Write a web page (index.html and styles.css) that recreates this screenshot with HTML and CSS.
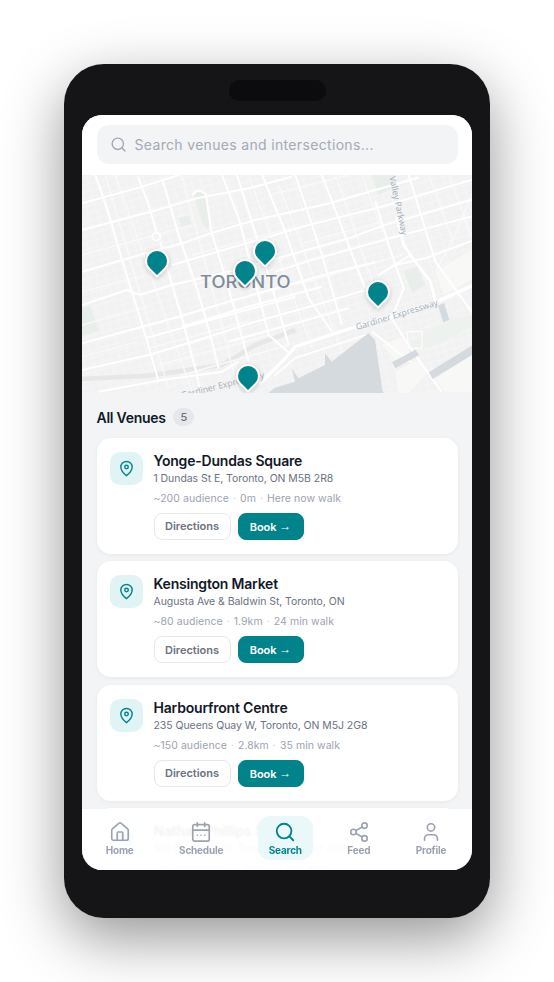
FILE: index.html
```html
<!DOCTYPE html>
<html lang="en">
<head>
  <meta charset="UTF-8" />
  <meta name="viewport" content="width=device-width, initial-scale=1.0" />
  <title>Venue Search</title>
  <link rel="stylesheet" href="styles.css">
</head>
<body>
  <div class="phone">
    <div class="notch"></div>
    <div class="screen">
      <div class="search-head">
        <div class="search-box">
          <svg class="search-icon" viewBox="0 0 24 24"><circle cx="11" cy="11" r="8"/><path d="m21 21-4.3-4.3"/></svg>
          <span>Search venues and intersections...</span>
        </div>
      </div>

      <div class="map">
        <svg class="map-art" viewBox="0 0 1170 654" preserveAspectRatio="none">
          <defs>
            <pattern id="blocks" width="27" height="21" patternUnits="userSpaceOnUse" patternTransform="rotate(-16)">
              <rect width="27" height="21" fill="#f1f2f1"/>
              <path d="M0 10H27M13 0V21" stroke="#f6f6f6" stroke-width="2.5"/>
            </pattern>
          </defs>
          <rect x="0" y="0" width="1176" height="660" fill="url(#blocks)"/>

          <!-- parks -->
          <g fill="#e8eee9">
            <path d="M338 70q2-22 18-20 16 2 20 30l6 70-8 12-12-14z"/>
            <path d="M0 400l25-8 25 75-50 15z"/>
            <path d="M965 290l40-15 25 55-40 25z"/>
            <path d="M870 0h70l-10 40-40 20z"/>
            <path d="M290 130l30-8 10 30-30 8z"/>
            <path d="M985 500l120-70 70-10v30l-110 60-70 20z" fill="#eef2ee"/>
          </g>

          <!-- open ground by the lake -->
          <g fill="#f8f8f7">
            <path d="M1060 290l116-70v90l-90 50z"/>
            <path d="M900 510l60-25 25 50-40 25z"/>
            <path d="M940 590l70-40 30 40-60 64h-30z"/>
            <path d="M1060 610l116-80v120h-90z"/>
          </g>

          <!-- rail corridor -->
          <path d="M0 612L200 602 420 570 520 510 640 465" fill="none" stroke="#e6e8e7" stroke-width="14"/>

          <!-- side streets -->
          <g fill="none" stroke="#f9f9f9" stroke-width="4">
            <path d="M100 0L330 650M300 0L470 650M590 30L780 530M70 0L260 640M500 0L690 520"/>
            <path d="M0 240L330 150M0 350L190 300M560 60L800 0M640 330L960 240M330 240L640 155M660 205L900 140"/>
            <path d="M0 545L170 500M200 520L500 440M230 570L560 480M300 600L620 510M0 450L200 395M330 330L600 255"/>
            <path d="M760 0L900 400M1100 0L1176 200M840 0L900 170M1040 0L1110 190"/>
            <path d="M1176 40L1120 180 1060 290"/>
          </g>

          <!-- main streets -->
          <g fill="none" stroke="#fff" stroke-width="6">
            <path d="M0 85L180 35 290 0"/>
            <path d="M0 165L215 108 345 70 500 40 630 5"/>
            <path d="M0 290L190 235 300 205 385 175 520 135 744 85 880 45 1010 8"/>
            <path d="M0 390L135 345 175 360 270 330 440 290 640 235 800 190 909 150 1176 72"/>
            <path d="M0 505L290 425 440 380 600 335 760 290 880 262"/>
            <path d="M270 270L579 180 679 150 899 95 1176 12"/>
            <path d="M579 290L689 255 924 190 1176 122"/>
            <path d="M0 585L200 540 350 495 520 440 700 390 850 345"/>
            <path d="M190 490L440 420 640 365M300 455L500 395 720 335"/>
            <path d="M440 500L640 445 800 400M50 650L240 615 420 590 470 560"/>
            <path d="M1176 195L1030 250 940 270 890 300"/>
            <path d="M40 0L75 100 125 270 190 480 230 620"/>
            <path d="M168 5L200 90 223 170M235 202L270 330 300 430 345 600 355 654"/>
            <path d="M240 10L290 180 345 340 385 480 410 580"/>
            <path d="M330 60Q350 35 372 60L388 170 440 340 500 560"/>
            <path d="M420 0L470 130 520 320 560 480 622 535"/>
            <path d="M465 0L560 300 620 510"/>
            <path d="M540 0L610 170 680 370 750 470"/>
            <path d="M640 0L720 240 780 450"/>
            <path d="M720 0L830 290 850 340"/>
            <path d="M880 80L920 210 965 340 929 430 979 510 1079 650"/>
            <path d="M980 0L1060 260 1176 420"/>
            <path d="M870 470L985 560"/>
          </g>
          <path d="M975 470h45v50h-40z" fill="none" stroke="#fff" stroke-width="3"/>

          <!-- water -->
          <g fill="#d5dade">
            <path d="M552 660l27-22 60-18-10-40 20 30 80-40v-35l20 25 110-85 20 20 22 150 30 65z"/>
            <path d="M930 562l70-38 12 16-72 40z"/>
            <path d="M1040 592l136-84v28l-124 76z"/>
            <path d="M1068 392l18-8 16 50-18 8z"/>
          </g>
          <circle cx="223" cy="185" r="12" fill="#f3f4f3" stroke="#fff" stroke-width="5"/>

          <!-- highways -->
          <g fill="none" stroke="#fff" stroke-linecap="round">
            <path stroke-width="8" d="M945 130L965 210 1000 260 1045 320 1062 385"/>
            <path stroke-width="10" d="M535 625L600 560 640 515 800 462 1060 382 1176 330"/>
            <path stroke-width="5" d="M579 600L639 550 729 520 849 480"/>
            <path stroke-width="6" d="M890 300L985 240"/>
          </g>

          <!-- labels -->
          <text class="map-city" x="354" y="340" textLength="272" lengthAdjust="spacingAndGlyphs">TORONTO</text>
          <text class="map-road" transform="translate(825 465) rotate(-17)">Gardiner Expressway</text>
          <text class="map-road" transform="translate(300 670) rotate(-14)">Gardiner Expressway</text>
          <text class="map-road" transform="translate(922 6) rotate(78)">Valley Parkway</text>
        </svg>

        <div class="pin" style="left:74.5px;top:86px"></div>
        <div class="pin" style="left:183.3px;top:75.7px"></div>
        <div class="pin" style="left:163.3px;top:95.7px"></div>
        <div class="pin" style="left:296px;top:117.3px"></div>
        <div class="pin" style="left:166px;top:201.3px"></div>
      </div>

      <div class="venues">
        <div class="venues-head">
          <h2>All Venues</h2>
          <span class="count">5</span>
        </div>

        <div class="card">
          <div class="tile"><svg viewBox="0 0 24 24"><path d="M20 10c0 6-8 12-8 12s-8-6-8-12a8 8 0 0 1 16 0z"/><circle cx="12" cy="10" r="2.5"/></svg></div>
          <div class="card-body">
            <h3>Yonge-Dundas Square</h3>
            <p class="addr">1 Dundas St E, Toronto, ON M5B 2R8</p>
            <p class="meta">~200 audience<i>·</i>0m<i>·</i>Here now walk</p>
            <div class="actions">
              <button class="btn">Directions</button>
              <button class="btn book">Book <span class="arrow">→</span></button>
            </div>
          </div>
        </div>

        <div class="card">
          <div class="tile"><svg viewBox="0 0 24 24"><path d="M20 10c0 6-8 12-8 12s-8-6-8-12a8 8 0 0 1 16 0z"/><circle cx="12" cy="10" r="2.5"/></svg></div>
          <div class="card-body">
            <h3>Kensington Market</h3>
            <p class="addr">Augusta Ave &amp; Baldwin St, Toronto, ON</p>
            <p class="meta">~80 audience<i>·</i>1.9km<i>·</i>24 min walk</p>
            <div class="actions">
              <button class="btn">Directions</button>
              <button class="btn book">Book <span class="arrow">→</span></button>
            </div>
          </div>
        </div>

        <div class="card">
          <div class="tile"><svg viewBox="0 0 24 24"><path d="M20 10c0 6-8 12-8 12s-8-6-8-12a8 8 0 0 1 16 0z"/><circle cx="12" cy="10" r="2.5"/></svg></div>
          <div class="card-body">
            <h3>Harbourfront Centre</h3>
            <p class="addr">235 Queens Quay W, Toronto, ON M5J 2G8</p>
            <p class="meta">~150 audience<i>·</i>2.8km<i>·</i>35 min walk</p>
            <div class="actions">
              <button class="btn">Directions</button>
              <button class="btn book">Book <span class="arrow">→</span></button>
            </div>
          </div>
        </div>

        <div class="card">
          <div class="tile"><svg viewBox="0 0 24 24"><path d="M20 10c0 6-8 12-8 12s-8-6-8-12a8 8 0 0 1 16 0z"/><circle cx="12" cy="10" r="2.5"/></svg></div>
          <div class="card-body">
            <h3>Nathan Phillips Square</h3>
            <p class="addr">100 Queen St W, Toronto, ON M5H 2N2</p>
            <p class="meta">~90 audience<i>·</i>0.4km<i>·</i>5 min walk</p>
          </div>
        </div>
      </div>

      <nav class="tabbar">
        <a class="tab">
          <svg viewBox="0 0 24 24"><path d="M15 21v-8a1 1 0 0 0-1-1h-4a1 1 0 0 0-1 1v8"/><path d="M3 10a2 2 0 0 1 .709-1.528l7-5.999a2 2 0 0 1 2.582 0l7 5.999A2 2 0 0 1 21 10v9a2 2 0 0 1-2 2H5a2 2 0 0 1-2-2z"/></svg>
          <span>Home</span>
        </a>
        <a class="tab">
          <svg viewBox="0 0 24 24"><rect x="3" y="4" width="18" height="18" rx="2"/><path d="M16 2v4M8 2v4M3 10h18M8 15.5h.01M12 15.5h.01M16 15.5h.01"/></svg>
          <span>Schedule</span>
        </a>
        <a class="tab active">
          <svg viewBox="0 0 24 24"><circle cx="11" cy="11" r="8"/><path d="m21 21-4.3-4.3"/></svg>
          <span>Search</span>
        </a>
        <a class="tab">
          <svg viewBox="0 0 24 24"><circle cx="18" cy="5" r="3"/><circle cx="6" cy="12" r="3"/><circle cx="18" cy="19" r="3"/><path d="M8.59 13.51l6.83 3.98M15.41 6.51l-6.82 3.98"/></svg>
          <span>Feed</span>
        </a>
        <a class="tab">
          <svg viewBox="0 0 24 24"><path d="M19 21v-2a4 4 0 0 0-4-4H9a4 4 0 0 0-4 4v2"/><circle cx="12" cy="7" r="4"/></svg>
          <span>Profile</span>
        </a>
      </nav>
    </div>
  </div>
</body>
</html>
```

FILE: styles.css
```css
* {
  box-sizing: border-box;
}
body {
  font-family: 'Inter', 'Liberation Sans', sans-serif;
  background: #fff;
  color: #111827;
  margin: 0;
  height: 982px;
  display: flex;
  align-items: center;
  justify-content: center;
  overflow: hidden;
}
.phone {
  position: relative;
  width: 426px;
  height: 854px;
  padding: 51px 18px 48px;
  background: #151517;
  border-radius: 40px;
  box-shadow: 0 20px 60px rgba(0, 0, 0, 0.42);
}
.notch {
  position: absolute;
  top: 16px;
  left: 165px;
  width: 97px;
  height: 21px;
  background: #0c0c0e;
  border-radius: 11px;
}
.screen {
  position: relative;
  height: 100%;
  background: #f3f4f6;
  border-radius: 20px;
  overflow: hidden;
}
.search-head {
  background: #fff;
  padding: 10px 14.5px 11px;
}
.search-box {
  display: flex;
  align-items: center;
  gap: 7.5px;
  height: 39px;
  padding: 0 13.5px;
  background: #f3f4f6;
  border-radius: 12px;
  color: #a3a9b6;
  font-size: 14px;
  letter-spacing: 0.33px;
}
.search-icon {
  width: 17px;
  height: 17px;
  fill: none;
  stroke: #a3a9b6;
  stroke-width: 2;
  stroke-linecap: round;
}
.map {
  position: relative;
  height: 218px;
  overflow: hidden;
}
.map-art {
  display: block;
  width: 100%;
  height: 100%;
}
.map-city {
  font-family: 'Inter', sans-serif;
  font-size: 50px;
  font-weight: 500;
  fill: #7f8c9c;
}
.map-road {
  font-family: 'Open Sans', sans-serif;
  font-size: 26px;
  fill: #a0abb7;
}
.pin {
  position: absolute;
  width: 24px;
  height: 24px;
  margin: -12px 0 0 -12px;
  background: #00838a;
  border: 2px solid #fff;
  border-radius: 50% 50% 0 50%;
  transform: rotate(45deg);
  box-shadow: 1px 1px 5px rgba(0, 0, 0, 0.18);
}
.venues {
  padding: 15px 14.5px 0;
}
.venues-head {
  display: flex;
  align-items: center;
  gap: 7.5px;
  height: 18px;
  margin-bottom: 11.7px;
}
.venues-head h2 {
  margin: 0;
  font-size: 14px;
  font-weight: 600;
  letter-spacing: -0.25px;
  color: #111827;
}
.count {
  min-width: 21px;
  height: 18px;
  line-height: 18px;
  text-align: center;
  font-size: 11px;
  font-weight: 500;
  color: #6b7280;
  background: #e5e7eb;
  border-radius: 9px;
}
.card {
  display: flex;
  gap: 10.5px;
  height: 116px;
  margin-bottom: 7.6px;
  padding: 14px 14px 14px 13.5px;
  background: #fff;
  border-radius: 14px;
  box-shadow: 0 1px 4px rgba(0, 0, 0, 0.05);
}
.tile {
  flex: none;
  display: flex;
  align-items: center;
  justify-content: center;
  width: 33px;
  height: 33px;
  background: #e0f4f5;
  border-radius: 10px;
}
.tile svg {
  width: 17px;
  height: 17px;
  fill: none;
  stroke: #00838a;
  stroke-width: 2;
}
.card-body h3 {
  margin: 0 0 1px;
  font-size: 14px;
  line-height: 18px;
  font-weight: 600;
  letter-spacing: -0.2px;
  color: #111827;
}
.addr,
.meta {
  margin: 0;
  font-size: 10.5px;
  line-height: 15px;
  color: #6b7280;
}
.addr {
  letter-spacing: -0.06px;
}
.meta {
  margin-top: 5px;
  letter-spacing: 0.05px;
  color: #9ca3af;
}
.meta i {
  margin: 0 4px;
  font-style: normal;
  color: #c4c8d0;
}
.actions {
  display: flex;
  gap: 7px;
  margin-top: 7px;
}
.btn {
  height: 27px;
  width: 77px;
  padding: 0;
  font-family: inherit;
  font-size: 11px;
  font-weight: 600;
  color: #6b7280;
  background: #fff;
  border: 1px solid #e5e7eb;
  border-radius: 8px;
}
.btn.book {
  width: 66px;
  color: #fff;
  background: #00838a;
  border-color: #00838a;
}
.arrow {
  font-family: 'Liberation Sans', sans-serif;
  font-size: 12px;
  font-weight: 700;
  vertical-align: 1px;
}
.tabbar {
  position: absolute;
  left: 0;
  right: 0;
  bottom: 0;
  display: flex;
  justify-content: space-around;
  height: 61px;
  padding: 7px 3px 10px 1px;
  background: rgba(255, 255, 255, 0.95);
  backdrop-filter: blur(1px);
}
.tab {
  display: flex;
  flex-direction: column;
  align-items: center;
  gap: 1px;
  padding: 5px 11px 0;
  border-radius: 12px;
  font-size: 10px;
  line-height: 12px;
  font-weight: 700;
  letter-spacing: -0.2px;
  color: #9ca3af;
}
.tab svg {
  width: 22px;
  height: 22px;
  fill: none;
  stroke: #9ca3af;
  stroke-width: 1.8;
  stroke-linecap: round;
  stroke-linejoin: round;
}
.tab.active {
  color: #00838a;
  background: #ebf8f9;
}
.tab.active svg {
  stroke: #00838a;
  stroke-width: 2;
}
```
